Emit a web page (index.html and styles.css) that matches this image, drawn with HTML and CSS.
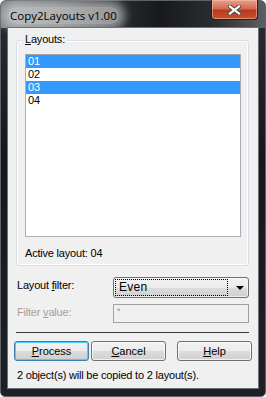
FILE: index.html
```html
<!DOCTYPE html>
<html lang="en">
<head>
  <meta charset="UTF-8" />
  <title>Copy2Layouts v1.00</title>
  <link rel="stylesheet" href="styles.css">
</head>
<body>

  <div class="window">
    <!-- Title bar -->
    <div class="titlebar">
      <span class="title">Copy2Layouts v1.00</span>
      <button class="close-btn" title="Close">
        <svg width="13" height="10" viewBox="0 0 13 10">
          <path d="M2 1.5 L11 8.5 M11 1.5 L2 8.5" stroke="#4a4a4a" stroke-width="4" stroke-linecap="square"/>
          <path d="M2 1.5 L11 8.5 M11 1.5 L2 8.5" stroke="#fff" stroke-width="2.2" stroke-linecap="square"/>
        </svg>
      </button>
    </div>

    <!-- Client area -->
    <div class="client">
      <div class="group">
        <span class="group-label"><u>L</u>ayouts:</span>
        <div class="listbox">
          <div class="list-item selected">01</div>
          <div class="list-item">02</div>
          <div class="list-item selected">03</div>
          <div class="list-item">04</div>
        </div>
        <div class="active-layout">Active layout: 04</div>
      </div>

      <div class="field-row">
        <span class="field-label">Layout <u>f</u>ilter:</span>
        <div class="combo">
          <span class="combo-value">Even</span>
          <span class="combo-arrow"></span>
        </div>
      </div>

      <div class="field-row second">
        <span class="field-label disabled">Filter <u>v</u>alue:</span>
        <div class="textbox">*</div>
      </div>

      <div class="separator"></div>

      <div class="buttons">
        <button class="btn default"><u>P</u>rocess</button>
        <button class="btn"><u>C</u>ancel</button>
        <button class="btn help"><u>H</u>elp</button>
      </div>

      <div class="status">2 object(s) will be copied to 2 layout(s).</div>
    </div>
  </div>

</body>
</html>
```

FILE: styles.css
```css
* { margin: 0; padding: 0; box-sizing: border-box; }

html, body {
  background: #ffffff;
  font-family: "Liberation Sans", Arial, sans-serif;
  font-size: 11px;
  letter-spacing: -0.2px;
  color: #000;
}

.window {
  width: 266px;
  height: 397px;
  border: 1px solid #5e6267;
  border-radius: 6px 6px 5px 5px;
  background: linear-gradient(to bottom, #2a2e32, #15181b 40%, #1d2125);
  display: flex;
  flex-direction: column;
}

/* Title bar */
.titlebar {
  height: 27px;
  display: flex;
  align-items: flex-start;
  justify-content: space-between;
  border-radius: 5px 5px 0 0;
  background: linear-gradient(to right, #80848a 0%, #63676c 22%, #2c2f32 42%, #17191b 60%, #2a2d30 80%, #5b5f63 100%);
}

.title {
  margin: 6px 0 0 7px;
  padding: 1px 2px;
  font-family: "Open Sans", "Liberation Sans", sans-serif;
  font-size: 11.5px;
  letter-spacing: 0;
  line-height: 15px;
  color: #000;
  background: rgba(225, 225, 225, 0.6);
  border-radius: 8px;
  box-shadow: 0 0 8px 6px rgba(225, 225, 225, 0.55);
}

.close-btn {
  width: 47px;
  height: 20px;
  margin: -1px 7px 0 0;
  border: 1px solid #3b1a12;
  border-top: none;
  border-radius: 0 0 4px 4px;
  background: linear-gradient(to bottom, #e5a08e 0%, #d46a52 45%, #b83a1e 55%, #c4512e 100%);
  box-shadow: inset 0 0 0 1px rgba(255, 200, 180, 0.5);
  display: flex;
  align-items: center;
  justify-content: center;
}

/* Client area */
.client {
  width: 250px;
  height: 360px;
  margin-left: 7px;
  background: #f0f0f0;
  box-shadow: 0 0 0 1px #6d7175;
  padding-top: 12px;
}

.group {
  position: relative;
  margin: 0 9px 0 8px;
  height: 226px;
  border: 1px solid #d5dfe5;
  border-radius: 3px;
  box-shadow: inset 0 0 0 1px #ffffff;
  padding: 13px 7px 0 8px;
}

.group-label {
  position: absolute;
  top: -8px;
  left: 6px;
  padding: 0 2px;
  background: #f0f0f0;
  line-height: 13px;
}

.listbox {
  height: 183px;
  background: #fff;
  border: 1px solid #abadb3;
  border-top-color: #9ca0a8;
}

.list-item {
  height: 13px;
  line-height: 13px;
  padding-left: 2px;
}

.list-item.selected {
  background: #3399ff;
  color: #fff;
}

.active-layout {
  margin-top: 10px;
  line-height: 13px;
}

/* Filter fields */
.field-row {
  display: flex;
  align-items: center;
  margin: 11px 0 0 9px;
}

.field-row.second {
  margin-top: 6px;
}

.field-label {
  width: 96px;
  line-height: 13px;
  padding-bottom: 4px;
}

.field-label.disabled {
  color: #a0a0a0;
  padding-bottom: 2px;
}

.combo {
  width: 136px;
  height: 21px;
  border: 1px solid #707070;
  border-radius: 3px;
  background: linear-gradient(to bottom, #f2f2f2 0%, #ebebeb 50%, #dddddd 50%, #cfcfcf 100%);
  box-shadow: inset 0 0 0 1px rgba(255, 255, 255, 0.6);
  display: flex;
  align-items: center;
  padding: 0 4px 0 1px;
}

.combo-value {
  width: 116px;
  height: 17px;
  border: 1px dotted #000;
  padding-left: 3px;
  font-size: 12px;
  line-height: 15px;
  letter-spacing: 0.3px;
}

.combo-arrow {
  margin-left: 8px;
  width: 0;
  height: 0;
  border-left: 4px solid transparent;
  border-right: 4px solid transparent;
  border-top: 4px solid #000;
}

.textbox {
  width: 136px;
  height: 19px;
  border: 1px solid #a0a0a0;
  background: #f0f0f0;
  color: #909090;
  font-size: 9px;
  line-height: 9px;
  padding: 2px 0 0 3px;
}

.separator {
  margin: 9px 9px 0 8px;
  border-top: 1px solid #3c3c3c;
}

/* Buttons */
.buttons {
  display: flex;
  margin: 8px 0 0 6px;
  gap: 2px;
}

.btn {
  width: 75px;
  height: 20px;
  font-family: "Liberation Sans", Arial, sans-serif;
  font-size: 11px;
  color: #000;
  border: 1px solid #707070;
  border-radius: 3px;
  background: linear-gradient(to bottom, #f2f2f2 0%, #ebebeb 50%, #dddddd 50%, #cfcfcf 100%);
  box-shadow: inset 0 0 0 1px rgba(255, 255, 255, 0.7);
}

.btn.default {
  border-color: #3c7fb1;
  box-shadow: inset 0 0 0 1px #48d1f8;
}

.btn.help {
  margin-left: 9px;
}

.status {
  margin: 8px 0 0 9px;
  line-height: 13px;
}
```
